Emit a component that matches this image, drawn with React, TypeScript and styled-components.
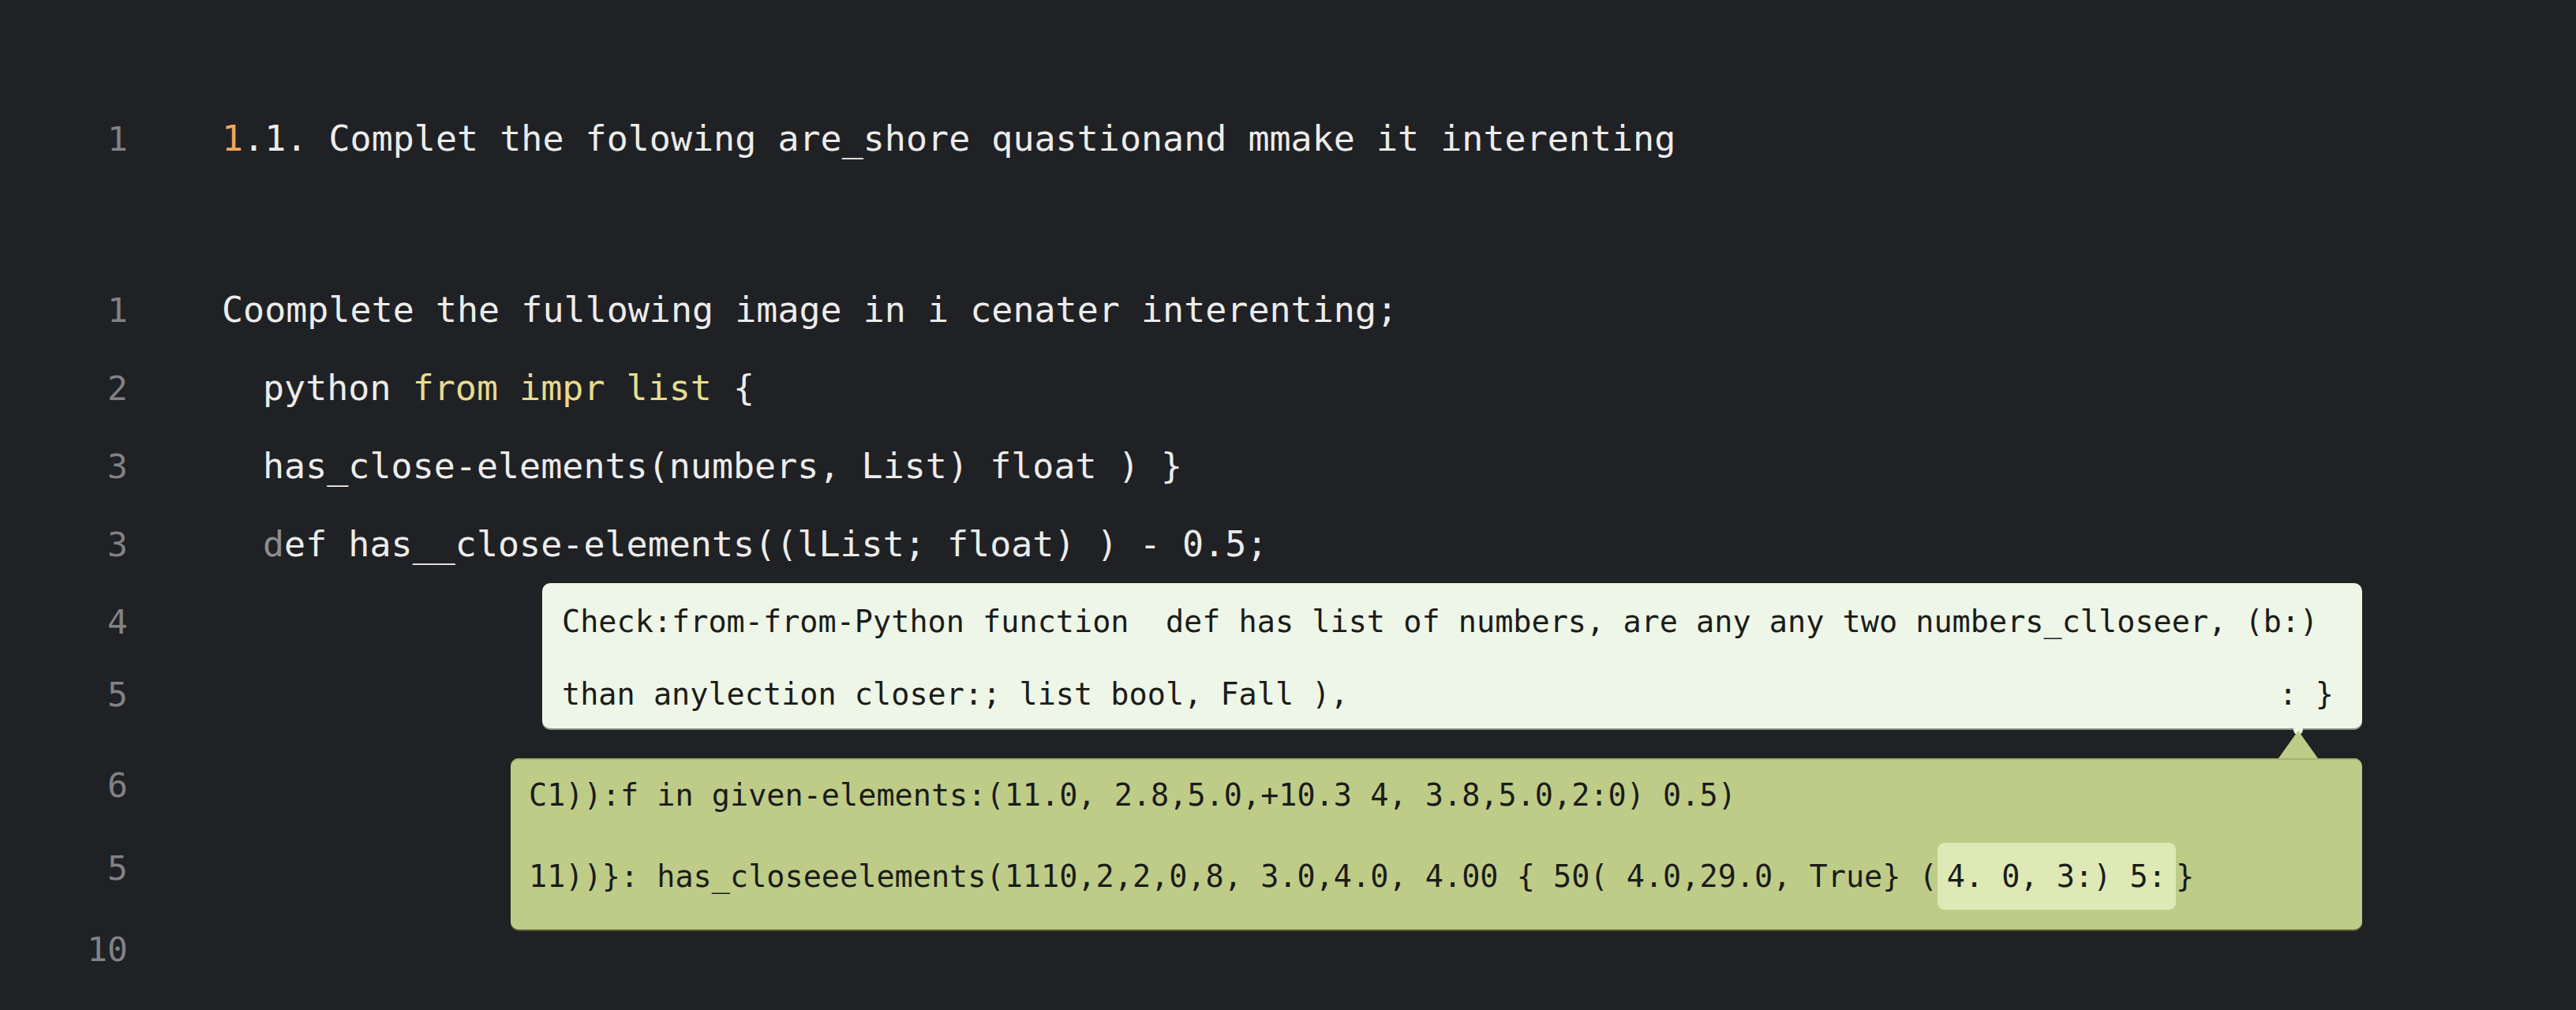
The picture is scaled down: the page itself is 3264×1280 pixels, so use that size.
import React from "react";
import styled, { createGlobalStyle } from "styled-components";

const GlobalStyle = createGlobalStyle`
  html, body {
    margin: 0;
    padding: 0;
    background: #202124;
  }
  body {
    min-height: 1280px;
  }
`;

const MONO = `"DejaVu Sans Mono", "Liberation Mono", monospace`;

const Editor = styled.div`
  display: flex;
  flex-direction: column;
  padding-top: 126px;
  min-height: 1280px;
  box-sizing: border-box;
  background: #202124;
`;

const Row = styled.div<{ $h: number; $mt?: number }>`
  display: grid;
  grid-template-columns: 162px 1fr;
  column-gap: 119px;
  align-items: center;
  height: ${(p) => p.$h}px;
  margin-top: ${(p) => p.$mt ?? 0}px;
`;

const LineNo = styled.div`
  text-align: right;
  font-family: ${MONO};
  font-size: 43px;
  color: #808286;
`;

const Code = styled.div<{ $indent?: number }>`
  font-family: ${MONO};
  font-size: 45px;
  color: #ececec;
  white-space: pre;
  padding-left: ${(p) => p.$indent ?? 0}px;
`;

const Tok = styled.span<{ $c: string }>`
  color: ${(p) => p.$c};
`;

const Block = styled.div<{ $mt?: number }>`
  display: grid;
  grid-template-columns: 162px 1fr;
  column-gap: 119px;
  align-items: start;
  margin-top: ${(p) => p.$mt ?? 0}px;
`;

const Gutter = styled.div<{ $pt: number; $gap: number }>`
  display: flex;
  flex-direction: column;
  padding-top: ${(p) => p.$pt}px;
  gap: ${(p) => p.$gap}px;
`;

const GutterNo = styled(LineNo)<{ $h: number }>`
  height: ${(p) => p.$h}px;
  line-height: ${(p) => p.$h}px;
`;

const Bubble = styled.div<{
  $left: number;
  $width: number;
  $h: number;
  $bg: string;
  $pl: number;
  $pt: number;
}>`
  position: relative;
  box-sizing: border-box;
  margin-left: ${(p) => p.$left}px;
  width: ${(p) => p.$width}px;
  height: ${(p) => p.$h}px;
  padding: ${(p) => p.$pt}px 36px 0 ${(p) => p.$pl}px;
  background: ${(p) => p.$bg};
  border-radius: 10px;
  font-family: ${MONO};
  font-size: 38.5px;
  color: #1b1c18;
`;

const NoteBubble = styled(Bubble)`
  box-shadow: 0 2px 0 #8d948b;
  &::after {
    content: "";
    position: absolute;
    top: 100%;
    left: 2219px;
    width: 12px;
    height: 8px;
    background: #eef6e8;
    border-radius: 0 0 6px 6px;
  }
`;

const ResultBubble = styled(Bubble)`
  box-shadow: inset 0 2px 0 #a6b26e, 0 2px 0 #555a38;
  &::before {
    content: "";
    position: absolute;
    bottom: 100%;
    left: 2240px;
    width: 0;
    height: 0;
    border-left: 25px solid transparent;
    border-right: 25px solid transparent;
    border-bottom: 35px solid #bfcc88;
  }
`;

const BubbleLine = styled.div<{ $h: number }>`
  display: flex;
  align-items: center;
  justify-content: space-between;
  height: ${(p) => p.$h}px;
  white-space: pre;
`;

const Chip = styled.span`
  display: inline-flex;
  align-items: center;
  height: 85px;
  padding: 0 12px;
  border-radius: 9px;
  background: #dee9b5;
`;

const ORANGE = "#f2a35f";
const YELLOW = "#e6dc8e";
const DIM = "#8c8d8f";

export default function App() {
  return (
    <>
      <GlobalStyle />
      <Editor>
        <Row $h={99}>
          <LineNo>1</LineNo>
          <Code>
            <Tok $c={ORANGE}>1</Tok>
            {".1. Complet the folowing are_shore quastionand mmake it interenting"}
          </Code>
        </Row>

        <Row $h={99} $mt={118}>
          <LineNo>1</LineNo>
          <Code>{"Coomplete the fullowing image in i cenater interenting;"}</Code>
        </Row>
        <Row $h={99}>
          <LineNo>2</LineNo>
          <Code $indent={52}>
            {"python "}
            <Tok $c={YELLOW}>from impr list</Tok>
            {" {"}
          </Code>
        </Row>
        <Row $h={99}>
          <LineNo>3</LineNo>
          <Code $indent={52}>{"has_close-elements(numbers, List) float ) }"}</Code>
        </Row>
        <Row $h={99}>
          <LineNo>3</LineNo>
          <Code $indent={52}>
            <Tok $c={DIM}>d</Tok>
            {"ef has__close-elements((lList; float) ) - 0.5;"}
          </Code>
        </Row>

        <Block>
          <Gutter $pt={3} $gap={0}>
            <GutterNo $h={92}>4</GutterNo>
            <GutterNo $h={92}>5</GutterNo>
          </Gutter>
          <NoteBubble $left={406} $width={2306} $h={184} $bg="#eef6e8" $pl={25} $pt={2}>
            <BubbleLine $h={92}>
              <span>{"Check:from-from-Python function  def has list of numbers, are any any two numbers_clloseer, (b:)"}</span>
            </BubbleLine>
            <BubbleLine $h={92}>
              <span>{"than anylection closer:; list bool, Fall ),"}</span>
              <span>{": }"}</span>
            </BubbleLine>
          </NoteBubble>
        </Block>

        <Block $mt={35}>
          <Gutter $pt={4} $gap={45}>
            <GutterNo $h={60}>6</GutterNo>
            <GutterNo $h={60}>5</GutterNo>
          </Gutter>
          <ResultBubble $left={366} $width={2346} $h={217} $bg="#bfcc88" $pl={23} $pt={0}>
            <BubbleLine $h={92}>
              <span>{"C1)):f in given-elements:(11.0, 2.8,5.0,+10.3 4, 3.8,5.0,2:0) 0.5)"}</span>
            </BubbleLine>
            <BubbleLine $h={114}>
              <span>
                {"11))}: has_closeeelements(1110,2,2,0,8, 3.0,4.0, 4.00 { 50( 4.0,29.0, True} ("}
                <Chip>{"4. 0, 3:) 5:"}</Chip>
                {"}"}
              </span>
            </BubbleLine>
          </ResultBubble>
        </Block>

        <Row $h={46}>
          <LineNo>10</LineNo>
          <Code />
        </Row>
      </Editor>
    </>
  );
}
